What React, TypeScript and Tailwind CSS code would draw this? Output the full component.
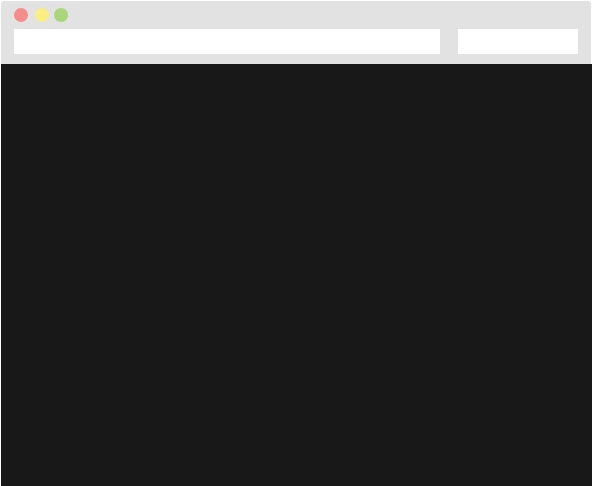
export default function App() {
  return (
    <div className="w-[593px] h-[486px] bg-white pt-px pl-px overflow-hidden">
      <div className="w-[591px] flex flex-col">
        <div className="h-[63px] w-[590px] bg-[#e2e2e2] rounded-t-[3px] px-[13px] pt-[7px] flex flex-col">
          <div className="flex items-center h-[14px]">
            <div className="w-[14px] h-[14px] rounded-full bg-[#f58d8d]" />
            <div className="w-[14px] h-[14px] rounded-full bg-[#faee82] ml-[7px]" />
            <div className="w-[14px] h-[14px] rounded-full bg-[#a9d57b] ml-[5px]" />
          </div>
          <div className="flex mt-[7px] gap-[18px]">
            <div className="h-[25px] w-[426px] bg-white" />
            <div className="h-[25px] w-[120px] bg-white" />
          </div>
        </div>
        <div className="h-[422px] w-[591px] bg-[#181818]" />
      </div>
    </div>
  );
}
